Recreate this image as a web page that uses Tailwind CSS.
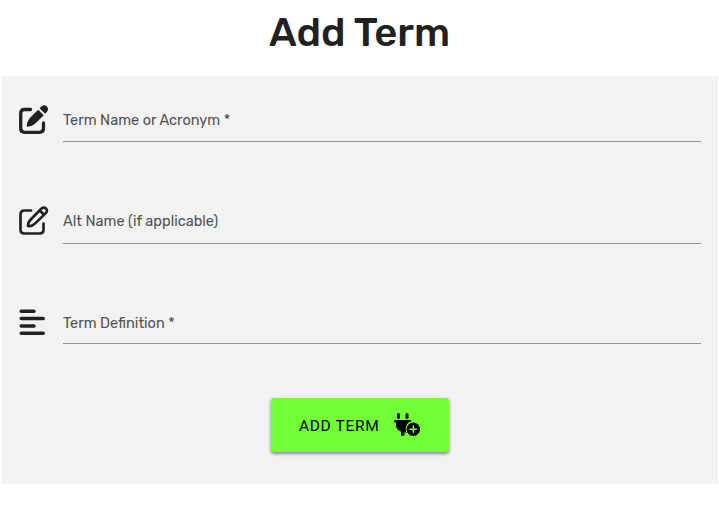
<!DOCTYPE html>
<html lang="en">
<head>
<meta charset="utf-8">
<title>Add Term</title>
<script src="https://cdn.jsdelivr.net/npm/@tailwindcss/browser@4"></script>
</head>
<body class="h-[521px] overflow-hidden bg-white px-0.5 font-[Rubik,Roboto,sans-serif] text-[#212121]">
<h1 class="flex h-[76px] items-start justify-center pt-[9px] text-[40px] leading-[48px] font-medium whitespace-nowrap">Add Term</h1>
<form class="mr-[-1px] flex h-[408px] flex-col rounded-[2px] bg-[#f2f2f2] pr-[17px] pl-[17px]">
  <div class="flex h-[66px] items-end">
    <svg class="mb-[7px] h-[30px] w-[30px] shrink-0" viewBox="0 0 30 30" fill="none">
      <path d="M11.500 4.500H5.500Q1.700 4.500 1.700 8.500V23.300Q1.700 27.300 5.500 27.300H20.500Q24.500 27.300 24.500 23.300V18" stroke="currentColor" stroke-width="3.300" stroke-linecap="round"/>
      <path d="M7.800 21.700C7.500 18.300 9 15 11.300 12.500L19.200 4.700L24.700 10.200L16.800 18.100C14.300 20.500 11.200 21.900 7.800 21.700Z" fill="currentColor"/>
      <path d="M20.600 3.300L22.300 1.600C24.100-.2 26.400-.1 27.900 1.400S29.500 5.200 27.800 7L26.100 8.800Z" fill="currentColor"/>
    </svg>
    <div class="ml-3.5 h-[34px] flex-1 border-b border-[#949494] text-[14.5px] leading-6 font-[450] text-[#515151]"><label>Term Name or Acronym *</label></div>
  </div>
  <div class="flex h-[102px] items-end">
    <svg class="mb-2 h-[30px] w-[30px] shrink-0" viewBox="0 0 30 30" fill="none" stroke="currentColor" stroke-width="2.700" stroke-linecap="round" stroke-linejoin="round">
      <path d="M12 4.500H5.500Q1.500 4.500 1.500 8.500V23.500Q1.500 27.500 5.500 27.500H20.500Q24.500 27.500 24.500 23.500V17.500"/>
      <path d="M9 20C9 17.500 10 15.300 12 13.300L22.300 2.700C23.600 1.300 25.600 1.300 26.900 2.500S28.300 5.500 27 6.900L16.200 17.400C14.200 19.400 11.500 20.500 9 20ZM20.800 4.500L25 8.700"/>
    </svg>
    <div class="ml-3.5 h-[35px] flex-1 border-b border-[#949494] text-[14.5px] leading-6 font-[450] text-[#515151]"><label>Alt Name (if applicable)</label></div>
  </div>
  <div class="flex h-[100px] items-end">
    <svg class="mb-2 h-[28px] w-[30px] shrink-0" viewBox="0 0 30 28" fill="none" stroke="currentColor" stroke-width="3.500" stroke-linecap="round">
      <path d="M2.200 3.300H15M2.200 10.600H24.200M2.200 17.900H15M2.200 25.200H24.200"/>
    </svg>
    <div class="ml-3.5 h-[33px] flex-1 border-b border-[#949494] text-[14.5px] leading-6 font-[450] text-[#515151]"><label>Term Definition *</label></div>
  </div>
  <button type="button" class="mt-[54px] ml-[252px] flex h-[54px] w-[178px] items-center rounded-[3px] bg-[#72ff35] pl-7 text-black shadow-[0_2px_3px_rgba(0,0,0,0.35),0_1px_4px_rgba(0,0,0,0.15)]">
    <span class="w-[94px] pt-0.5 text-left font-[Roboto,sans-serif] text-[15.5px] leading-5 font-normal tracking-[0.65px] whitespace-nowrap">ADD TERM</span>
    <svg class="h-[26px] w-[28px] shrink-0" viewBox="0 0 28 26" fill="currentColor">
      <rect x="4" y="1" width="3" height="6" rx="1.500"/><rect x="12.500" y="1" width="3" height="6" rx="1.500"/>
      <path d="M2.200 8H17.300Q18.400 8 18.200 9.200C15 10.200 12.700 13.200 12.700 16.800C12.700 18.500 13.200 20 14 21.200L11.500 20V22.500Q11.500 24 9.700 24Q8 24 8 22.500V19.500C5 18.700 2.900 16 2.900 12.500V10.500H2.200Q1 10.500 1 9.250T2.200 8Z"/>
      <circle cx="20.300" cy="17.300" r="6.700"/>
      <path d="M20.300 14V20.600M17 17.300H23.600" stroke="#72ff35" stroke-width="1.400" stroke-linecap="round"/>
    </svg>
  </button>
</form>
</body>
</html>
